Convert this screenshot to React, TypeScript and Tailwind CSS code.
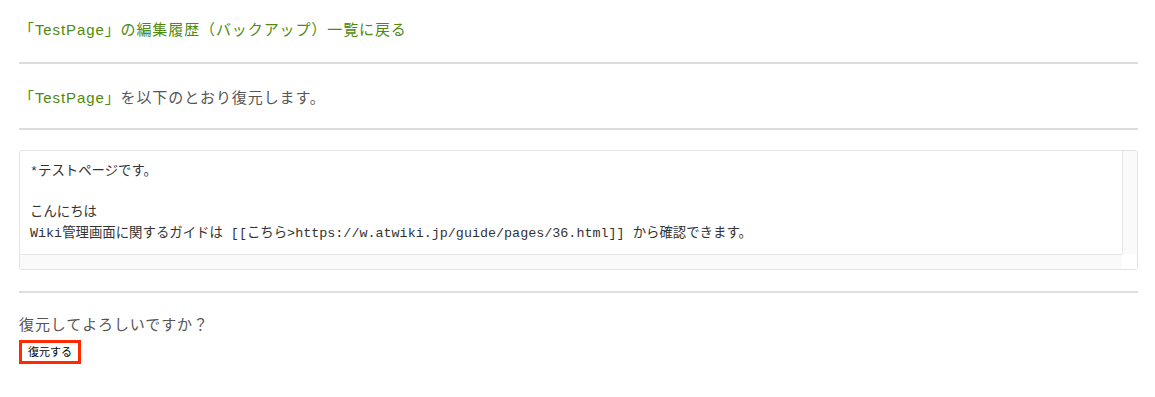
import React from "react";

const sans = { fontFamily: '"Liberation Sans", "Noto Sans CJK JP", sans-serif' };

const App = () => {
  return (
    <div
      className="min-h-[397px] bg-white pl-[19px] pr-[17px] pt-[20px] text-[15px] tracking-[0.9px] text-[#555]"
      style={sans}
    >
      <p className="leading-[20px]">
        <a href="#" className="text-[#4f8a10]">
          「TestPage」の編集履歴（バックアップ）一覧に戻る
        </a>
      </p>
      <hr className="mt-[22px] border-0 border-t-2 border-[#ddd]" />

      <p className="mt-[24px] leading-[20px]">
        <a href="#" className="text-[#4f8a10]">
          「TestPage」
        </a>
        を以下のとおり復元します。
      </p>
      <hr className="mt-[20px] border-0 border-t-2 border-[#ddd]" />

      <div className="mt-[20px] flex h-[120px] flex-col overflow-hidden rounded-[3px] border border-[#e3e3e3] tracking-normal">
        <div className="flex flex-1">
          <div
            className="flex-1 pl-[10px] pt-[11px] text-[13.4px] leading-[20.6px] text-[#333]"
            style={{ fontFamily: '"Liberation Mono", "Noto Sans CJK JP", monospace' }}
          >
            <div>*テストページです。</div>
            <div>&nbsp;</div>
            <div>こんにちは</div>
            <div className="whitespace-pre">
              Wiki管理画面に関するガイドは [[こちら&gt;https://w.atwiki.jp/guide/pages/36.html]] から確認できます。
            </div>
          </div>
          <div className="w-[15px] border-l border-[#e8e8e8] bg-[#fafafa]" />
        </div>
        <div className="flex h-[15px]">
          <div className="flex-1 border-t border-[#e8e8e8] bg-[#fafafa]" />
          <div className="w-[15px] bg-white" />
        </div>
      </div>

      <hr className="mt-[21px] border-0 border-t-2 border-[#ddd]" />

      <p className="mt-[22px] leading-[20px]">復元してよろしいですか？</p>
      <button
        type="button"
        className="mt-[5px] flex h-[24px] w-[62px] items-center justify-center border-[3px] border-[#ff2a00] bg-white text-[11px] tracking-normal text-black"
      >
        復元する
      </button>
    </div>
  );
};

export default App;
